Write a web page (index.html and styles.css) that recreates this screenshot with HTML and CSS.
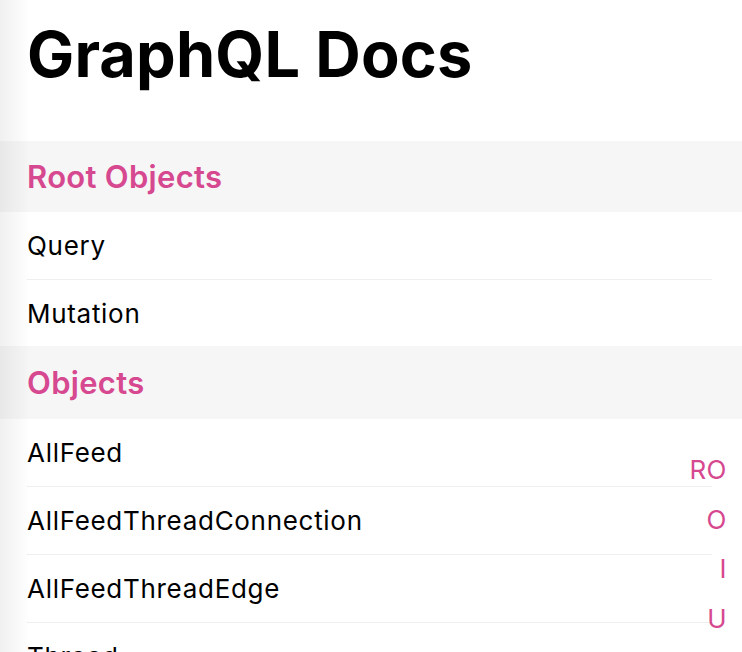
FILE: index.html
```html
<!DOCTYPE html>
<html>
<head>
<meta charset="utf-8">
<link rel="stylesheet" href="styles.css">
</head>
<body>
<div class="page">
  <h1 class="title">GraphQL Docs</h1>
  <section>
    <div class="section-header">Root Objects</div>
    <div class="row">Query</div>
    <div class="row last">Mutation</div>
  </section>
  <section>
    <div class="section-header second">Objects</div>
    <div class="row">AllFeed</div>
    <div class="row">AllFeedThreadConnection</div>
    <div class="row">AllFeedThreadEdge</div>
    <div class="row">Thread</div>
  </section>
  <nav class="index">
    <span>RO</span>
    <span>O</span>
    <span>I</span>
    <span>U</span>
  </nav>
  <div class="edge-shadow"></div>
</div>
</body>
</html>
```

FILE: styles.css
```css
html, body {
  margin: 0;
  padding: 0;
  background: #fff;
  overflow: hidden;
}
body {
  font-family: Inter, "Noto Sans", sans-serif;
  color: #000;
  height: 652px;
}
.page {
  position: relative;
  height: 652px;
  overflow: hidden;
}
.title {
  margin: 0;
  height: 141px;
  padding: 14px 0 0 27px;
  box-sizing: border-box;
  font-size: 63px;
  font-weight: 700;
  line-height: 80px;
  letter-spacing: 0.15px;
}
.section-header {
  height: 71px;
  background: #f6f6f6;
  padding-left: 27px;
  display: flex;
  align-items: center;
  color: #d6488f;
  font-size: 31px;
  font-weight: 600;
  letter-spacing: 0.3px;
}
.section-header.second {
  height: 73px;
}
.row {
  margin: 0 30px 0 27px;
  height: 67px;
  border-bottom: 1px solid #efefef;
  display: flex;
  align-items: center;
  font-size: 26px;
  font-weight: 400;
  letter-spacing: 0.7px;
}
.row.last {
  height: 66px;
  border-bottom: 0;
}
.index {
  position: absolute;
  right: 15px;
  top: 445px;
  display: flex;
  flex-direction: column;
  align-items: flex-end;
  color: #d6488f;
  font-size: 26px;
  line-height: 49.5px;
  letter-spacing: 0.5px;
}
.edge-shadow {
  position: absolute;
  left: 0;
  top: 0;
  bottom: 0;
  width: 30px;
  background: linear-gradient(to right, rgba(0,0,0,0.06), rgba(0,0,0,0));
  pointer-events: none;
}
```
